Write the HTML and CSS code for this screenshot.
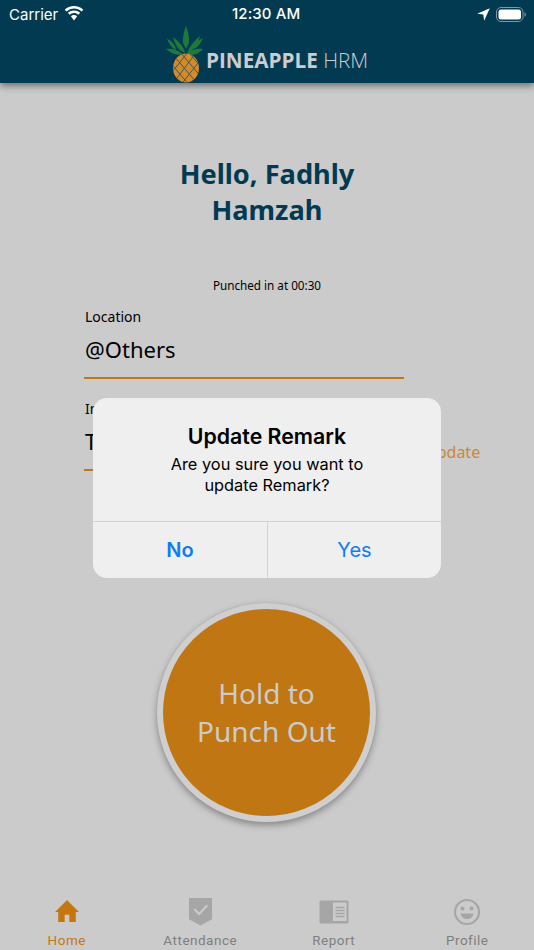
FILE: index.html
```html
<!DOCTYPE html>
<html lang="en">
<head>
<meta charset="utf-8">
<title>Pineapple HRM</title>
<link rel="stylesheet" href="styles.css">
</head>
<body>
<div class="screen">
  <header class="header">
    <div class="status">
      <div class="status-left">
        <span>Carrier</span>
        <svg class="wifi" width="20" height="15" viewBox="0 0 20 15"><path d="M10 2.600c2.900 0 5.500 1.100 7.500 3l1.800-1.900A13.500 13.500 0 0 0 10 0 13.500 13.500 0 0 0 .7 3.700l1.800 1.900a10.900 10.900 0 0 1 7.500-3z" fill="#fff"/><path d="M10 7c1.700 0 3.200.6 4.400 1.700l1.800-1.900A9 9 0 0 0 10 4.400a9 9 0 0 0-6.200 2.400l1.800 1.900A6.500 6.500 0 0 1 10 7z" fill="#fff"/><path d="M10 9c-1.200 0-2.300.5-3.100 1.300L10 14.500l3.100-4.200A4.500 4.500 0 0 0 10 9z" fill="#fff"/></svg>
      </div>
      <span class="clock">12:30 AM</span>
      <div class="status-right">
        <svg width="13" height="13" viewBox="0 0 12 12"><path d="M11.800.2 .2 5.400l5.600.7.800 5.700z" fill="#fff"/></svg>
        <svg width="30" height="15" viewBox="0 0 30 15"><rect x=".5" y=".5" width="26.500" height="14" rx="4.500" fill="none" stroke="#7d98a6"/><rect x="2.500" y="2.500" width="22.500" height="10" rx="2.500" fill="#fff"/><path d="M28.500 5.200c.9.300 1.300 1.200 1.300 2.300s-.4 2-1.300 2.300z" fill="#7d98a6"/></svg>
      </div>
    </div>
    <div class="brand">
      <svg class="pineapple" width="40" height="58" viewBox="0 0 40 58">
        <defs><clipPath id="fruit"><ellipse cx="20" cy="42" rx="13" ry="14.500"/></clipPath></defs>
        <g fill="#1e7a3a">
          <path d="M20 0c2 5 3.500 11 3 17l-3 6-3-6c-.5-6 1-12 3-17z"/>
          <path d="M7 11c3.500 2.500 8 7 11 12l1 4c-6-2-10-8-12-16z"/>
          <path d="M34 10c-3.500 3-8 7.500-11 12.500l-2 5c6-2 11-9 13-17.500z"/>
          <path d="M1 13c3 1 6 3.500 8 7l1 4c-4-2-7-6-9-11z"/>
          <path d="M37 12c-3 1.500-6 3.500-8 7l-1 4c4-2 7-6 9-11z"/>
          <path d="M0 23c5-1 11 0 17 5-6 1.500-11 .5-17-5z"/>
          <path d="M37 23c-5-.5-12 0-16 5.500 6 1.500 12-.5 16-5.500z"/>
        </g>
        <ellipse cx="20" cy="42" rx="13" ry="14.500" fill="#d38a2a"/>
        <path clip-path="url(#fruit)" d="M2 34l22 26M8 30l22 26M15 27l20 24M23 27l14 16M36 32 14 60M29 28 8 56M22 26 3 50M14 27 3 41" stroke="#3f5a5c" stroke-width="1" fill="none"/>
      </svg>
      <span class="brand-name"><b>PINEAPPLE</b> HRM</span>
    </div>
  </header>

  <main class="main">
    <h1 class="greeting">Hello, Fadhly<br>Hamzah</h1>
    <p class="punched">Punched in at 00:30</p>
    <div class="field field-location">
      <label class="field-label">Location</label>
      <div class="field-value">@Others</div>
    </div>
    <div class="remark-row">
      <div class="field field-remark">
        <label class="field-label">In</label>
        <div class="field-value">T</div>
      </div>
      <span class="update">Update</span>
    </div>
    <div class="punch-wrap">
      <button class="punch">Hold to<br>Punch Out</button>
    </div>
  </main>

  <nav class="tabbar">
    <div class="tab tab-active">
      <svg class="icon-home" width="26" height="24" viewBox="0 0 28 26"><path d="M14 1 1 14h3.500v11h7v-8h5v8h7V14H27z" fill="#c47610"/></svg>
      <span>Home</span>
    </div>
    <div class="tab">
      <svg width="25" height="29" viewBox="0 0 26 30"><path d="M1 1h24v22l-12 6.500L1 23z" fill="#a6a6a6"/><path d="m6.500 12.500 5 5 8.500-9" fill="none" stroke="#cbcbcb" stroke-width="2.200"/></svg>
      <span>Attendance</span>
    </div>
    <div class="tab">
      <svg class="icon-report" width="30" height="24" viewBox="0 0 30 24"><rect width="29" height="23" x=".5" y=".5" rx="1.500" fill="#a6a6a6"/><rect x="14" y="2.500" width="13.500" height="18.500" fill="#cbcbcb"/><path d="M16.500 7.500h9M16.500 10.500h9M16.500 13.500h9M16.500 16.500h9" stroke="#a6a6a6" stroke-width="1.500"/></svg>
      <span>Report</span>
    </div>
    <div class="tab">
      <svg width="28" height="28" viewBox="0 0 28 28"><circle cx="14" cy="14" r="12" fill="none" stroke="#a6a6a6" stroke-width="2.200"/><circle cx="9.500" cy="10.500" r="2" fill="#a6a6a6"/><circle cx="18.500" cy="10.500" r="2" fill="#a6a6a6"/><path d="M7.500 15.500h13c-.5 3.500-3 5.500-6.500 5.500s-6-2-6.500-5.500z" fill="#a6a6a6"/></svg>
      <span>Profile</span>
    </div>
  </nav>

  <div class="alert">
    <div class="alert-body">
      <h2 class="alert-title">Update Remark</h2>
      <p class="alert-msg">Are you sure you want to<br>update Remark?</p>
    </div>
    <div class="alert-actions">
      <div class="alert-btn alert-no">No</div>
      <div class="alert-btn">Yes</div>
    </div>
  </div>
</div>
</body>
</html>
```
FILE: styles.css
```css
* { box-sizing: border-box; }
html, body { margin: 0; padding: 0; }
body { background: #cbcbcb; font-family: "Noto Sans", "Open Sans", sans-serif; }
.screen { position: relative; width: 534px; height: 950px; overflow: hidden; display: flex; flex-direction: column; background: #cbcbcb; }

.header { height: 83px; background: #023a52; box-shadow: 0 3px 7px rgba(0,0,0,.45); position: relative; flex: none; }
.status { height: 28px; display: flex; align-items: center; justify-content: space-between; padding: 0 8px 0 9px; color: #fff; font-family: Inter, Roboto, sans-serif; font-size: 15px; position: relative; }
.status-left { display: flex; align-items: center; gap: 6px; }
.wifi { margin-top: -2px; }
.clock { position: absolute; left: 232px; top: 4px; line-height: 20px; font-weight: 500; letter-spacing: .1px; }
.status-right { display: flex; align-items: center; gap: 6px; }
.brand { position: absolute; left: 166px; top: 26px; display: flex; align-items: center; gap: 0; }
.pineapple { display: block; }
.brand-name { color: #cbcdcf; font-size: 20.700px; font-weight: 300; margin-top: 10px; white-space: nowrap; font-family: "Open Sans", sans-serif; }
.brand-name b { font-weight: 700; }

.main { flex: 1; display: flex; flex-direction: column; padding: 73px 0 0; }
.greeting { margin: 0; text-align: center; color: #023a52; font-size: 27.200px; line-height: 36px; font-weight: 700; }
.punched { margin: 49px 0 0; text-align: center; color: #000; font-size: 11.700px; line-height: 17px; }
.field { border-bottom: 2px solid #c47610; margin-left: 84px; }
.field-location { width: 320px; margin-top: 13px; height: 72px; }
.field-label { display: block; font-size: 14px; line-height: 20px; color: #000; padding-left: 1px; }
.field-value { font-size: 22px; line-height: 30px; margin-top: 7px; color: #000; padding-left: 1px; }
.remark-row { display: flex; align-items: flex-start; margin-top: 20px; }
.field-remark { width: 320px; height: 72px; }
.update { color: #c68a3c; font-size: 16px; line-height: 22px; margin: 42px 0 0 21px; }
.punch-wrap { display: flex; justify-content: center; margin-top: 132px; padding-right: 1px; }
.punch { width: 219px; height: 219px; border-radius: 50%; background: #c07612; border: 6.500px solid #cfcfcf; box-shadow: 0 0 1px #a8a79f, 0 3px 7px rgba(0,0,0,.35); color: #cbcbcb; font-family: inherit; font-size: 28px; line-height: 38px; padding: 0 0 2px; }

.tabbar { flex: none; height: 61px; display: grid; grid-template-columns: repeat(4, 1fr); }
.tab { display: flex; flex-direction: column; align-items: center; justify-content: flex-end; color: #7f7f7f; font-family: Roboto, Inter, sans-serif; font-size: 13.500px; line-height: 20px; letter-spacing: .5px; }
.tab svg { margin-bottom: 4px; }
.tab .icon-home { margin-bottom: 7px; }
.tab .icon-report { margin-bottom: 6px; }
.tab-active { color: #c47610; }

.alert { position: absolute; left: 93px; top: 398px; width: 348px; height: 180px; border-radius: 14px; background: #efefef; display: flex; flex-direction: column; font-family: Inter, Roboto, sans-serif; text-align: center; color: #000; }
.alert-body { height: 124px; padding-top: 25px; border-bottom: 1px solid #d2d2d2; }
.alert-title { margin: 0; font-size: 21.300px; line-height: 27px; font-weight: 600; }
.alert-msg { margin: 4px 0 0; font-size: 16.350px; line-height: 21px; }
.alert-actions { flex: 1; display: grid; grid-template-columns: 175px 1fr; }
.alert-btn { color: #0f7bfa; font-size: 20px; display: flex; align-items: center; justify-content: center; }
.alert-no { font-weight: 600; border-right: 1px solid #d2d2d2; }
```
